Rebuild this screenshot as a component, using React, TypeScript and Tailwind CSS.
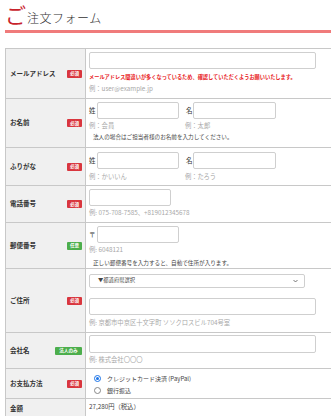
import React from "react";

function Badge({ kind }: { kind: "req" | "opt" | "corp" }) {
  if (kind === "req")
    return (
      <span className="flex h-[8px] w-[15px] items-center justify-center rounded-[1px] bg-[#d9363e] text-[4.6px] font-bold leading-none text-white">
        必須
      </span>
    );
  if (kind === "opt")
    return (
      <span className="flex h-[8px] w-[15px] items-center justify-center rounded-[1px] bg-[#4cae4c] text-[4.6px] font-bold leading-none text-white">
        任意
      </span>
    );
  return (
    <span className="flex h-[8px] w-[27px] items-center justify-center rounded-[1px] bg-[#4cae4c] text-[4.6px] font-bold leading-none text-white">
      法人のみ
    </span>
  );
}

function Row({
  label,
  badge,
  h,
  children,
}: {
  label: string;
  badge?: "req" | "opt" | "corp";
  h: string;
  children?: React.ReactNode;
}) {
  return (
    <div className={`flex border-t border-[#c8c8c8] ${h}`}>
      <div className="flex w-[80px] shrink-0 items-center justify-between border-r border-[#c8c8c8] bg-[#f0f0f0] pl-[4px] pr-[3px]">
        <span className="text-[6.5px] font-bold text-[#333]">{label}</span>
        {badge && <Badge kind={badge} />}
      </div>
      <div className="flex-1 pl-[3px]">{children}</div>
    </div>
  );
}

function Input({ w }: { w: string }) {
  return <div className={`h-[17px] rounded-[2px] border border-[#cfcfcf] bg-white ${w}`} />;
}

function Ex({ children, cls = "" }: { children: React.ReactNode; cls?: string }) {
  return <div className={`h-[8px] text-[6.3px] leading-[8px] text-[#a8a8a8] ${cls}`}>{children}</div>;
}

export default function App() {
  return (
    <div className="h-[416px] w-[331px] overflow-hidden bg-white font-['Noto_Sans_CJK_JP',sans-serif] text-[#333]">
      <div className="flex h-[30px] items-end pl-[5px] pb-[5px]">
        <span className="text-[21px] leading-[22px] text-[#c8232c]">ご</span>
        <span className="ml-[1px] text-[12px] font-light leading-[14px] tracking-[0.5px] text-[#333]">注文フォーム</span>
      </div>
      <div className="ml-[5px] h-[3px] bg-[#f07b7b]" />
      <div className="h-[15px]" />
      <div className="ml-[5px] w-[340px] border-l border-[#c8c8c8]">
        <Row label="メールアドレス" badge="req" h="h-[50px]">
          <div className="pt-[3px]">
            <Input w="w-[227px]" />
            <div className="mt-[4px] h-[7px] text-[5.2px] font-bold leading-[7px] text-[#e8201c]">
              メールアドレス間違いが多くなっているため、確認していただくようお願いいたします。
            </div>
            <Ex cls="mt-[5px]">例：user@example.jp</Ex>
          </div>
        </Row>
        <Row label="お名前" badge="req" h="h-[49px]">
          <div className="pt-[3px]">
            <div className="flex items-center">
              <span className="w-[8px] text-[6.5px]">姓</span>
              <Input w="w-[82px]" />
              <span className="ml-[7px] w-[7px] text-[6.5px]">名</span>
              <Input w="w-[83px]" />
            </div>
            <div className="mt-[3px] flex">
              <Ex cls="w-[96px]">例：会員</Ex>
              <Ex>例：太郎</Ex>
            </div>
            <div className="mt-[3px] pl-[4px] text-[5.6px] leading-[8px] text-[#444]">
              法人の場合はご担当者様のお名前を入力してください。
            </div>
          </div>
        </Row>
        <Row label="ふりがな" badge="req" h="h-[38px]">
          <div className="pt-[4px]">
            <div className="flex items-center">
              <span className="w-[8px] text-[6.5px]">姓</span>
              <Input w="w-[82px]" />
              <span className="ml-[7px] w-[7px] text-[6.5px]">名</span>
              <Input w="w-[83px]" />
            </div>
            <div className="mt-[4px] flex">
              <Ex cls="w-[96px]">例：かいいん</Ex>
              <Ex>例：たろう</Ex>
            </div>
          </div>
        </Row>
        <Row label="電話番号" badge="req" h="h-[37px]">
          <div className="pt-[3px]">
            <Input w="w-[82px]" />
            <Ex cls="mt-[3px]">例: 075-708-7585、+819012345678</Ex>
          </div>
        </Row>
        <Row label="郵便番号" badge="opt" h="h-[46px]">
          <div className="pt-[3px]">
            <div className="flex items-center">
              <span className="w-[8px] text-[6.5px]">〒</span>
              <Input w="w-[82px]" />
            </div>
            <Ex cls="mt-[3px]">例: 6048121</Ex>
            <div className="mt-[5px] pl-[4px] text-[5.6px] leading-[8px] text-[#444]">
              正しい郵便番号を入力すると、自動で住所が入ります。
            </div>
          </div>
        </Row>
        <Row label="ご住所" badge="req" h="h-[64px]">
          <div className="pt-[5px]">
            <div className="flex h-[14px] w-[216px] items-center justify-between rounded-[2px] border border-[#cfcfcf] bg-white pl-[8px] pr-[6px]">
              <span className="text-[5.3px] text-[#444]">▼都道府県選択</span>
              <svg width="5" height="4" viewBox="0 0 10 6">
                <path d="M1 1 L5 5 L9 1" stroke="#555" strokeWidth="1.6" fill="none" />
              </svg>
            </div>
            <div className="mt-[10px]">
              <Input w="w-[227px]" />
            </div>
            <Ex cls="mt-[4px]">例: 京都市中京区十文字町 ソソクロスビル704号室</Ex>
          </div>
        </Row>
        <Row label="会社名" badge="corp" h="h-[36px]">
          <div className="pt-[2px]">
            <div className="h-[18px] w-[227px] rounded-[2px] border border-[#cfcfcf] bg-white" />
            <Ex cls="mt-[3px]">例: 株式会社〇〇〇</Ex>
          </div>
        </Row>
        <Row label="お支払方法" badge="req" h="h-[30px]">
          <div className="pt-[3px] pl-[5px]">
            <div className="flex h-[12px] items-center">
              <span className="flex h-[7px] w-[7px] items-center justify-center rounded-full border-[1.5px] border-[#1a73e8] bg-white">
                <span className="h-[3px] w-[3px] rounded-full bg-[#1a73e8]" />
              </span>
              <span className="ml-[6px] text-[6px] text-[#444]">クレジットカード決済 (PayPal)</span>
            </div>
            <div className="flex h-[12px] items-center">
              <span className="h-[7px] w-[7px] rounded-full border border-[#888] bg-white" />
              <span className="ml-[6px] text-[6px] text-[#444]">銀行振込</span>
            </div>
          </div>
        </Row>
        <Row label="金額" h="h-[20px]">
          <div className="pt-[4px] text-[6.3px] leading-[8px] text-[#444]">27,280円（税込）</div>
        </Row>
      </div>
    </div>
  );
}
